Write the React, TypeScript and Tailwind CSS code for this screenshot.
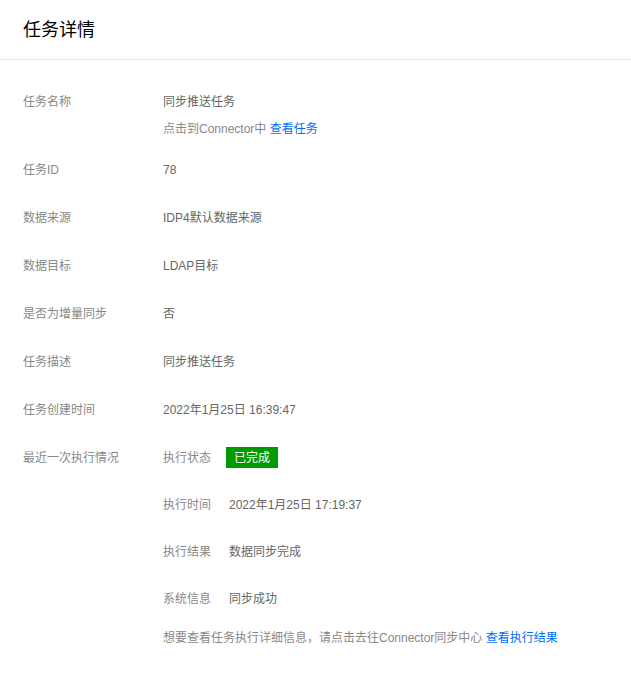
const font = { fontFamily: '"Liberation Sans", "Noto Sans CJK SC", sans-serif' };

function Row({ label, children, className = "" }: { label: string; children: React.ReactNode; className?: string }) {
  return (
    <div className={`flex text-[12px] leading-[18px] ${className}`}>
      <div className="w-[140px] shrink-0 text-[#888888]">{label}</div>
      <div className="flex-1 text-[#666666]">{children}</div>
    </div>
  );
}

function Sub({ label, children, className = "" }: { label: string; children: React.ReactNode; className?: string }) {
  return (
    <div className={`flex h-[21px] items-center ${className}`}>
      <div className="w-[66px] shrink-0 text-[#888888]">{label}</div>
      <div>{children}</div>
    </div>
  );
}

export default function App() {
  return (
    <div className="min-h-[680px] w-full bg-white" style={font}>
      <div className="flex h-[60px] items-center border-b border-[#e5e5e5] pl-[23px] pt-[1px]">
        <h1 className="text-[18px] font-normal text-[#000000]">任务详情</h1>
      </div>
      <div className="pl-[23px] pr-4 pt-[33px]">
        <Row label="任务名称" className="mb-[23px]">
          <div>同步推送任务</div>
          <div className="mt-[9px] text-[#888888]">
            点击到Connector中 <a className="cursor-pointer text-[#006eff]">查看任务</a>
          </div>
        </Row>
        <Row label="任务ID" className="mb-[30px]">78</Row>
        <Row label="数据来源" className="mb-[30px]">IDP4默认数据来源</Row>
        <Row label="数据目标" className="mb-[30px]">LDAP目标</Row>
        <Row label="是否为增量同步" className="mb-[30px]">否</Row>
        <Row label="任务描述" className="mb-[30px]">同步推送任务</Row>
        <Row label="任务创建时间" className="mb-[28px]">2022年1月25日 16:39:47</Row>
        <div className="flex text-[12px] leading-[18px]">
          <div className="flex h-[21px] w-[140px] shrink-0 items-center text-[#888888]">最近一次执行情况</div>
          <div className="flex-1 text-[#666666]">
            <Sub label="执行状态">
              <span className="-ml-[3px] inline-flex h-[21px] items-center bg-[#009a00] px-[8px] text-white">已完成</span>
            </Sub>
            <Sub label="执行时间" className="mt-[26px]">2022年1月25日 17:19:37</Sub>
            <Sub label="执行结果" className="mt-[26px]">数据同步完成</Sub>
            <Sub label="系统信息" className="mt-[26px]">同步成功</Sub>
            <div className="mt-[20px] text-[#888888]">
              想要查看任务执行详细信息，请点击去往Connector同步中心 <a className="cursor-pointer text-[#006eff]">查看执行结果</a>
            </div>
          </div>
        </div>
      </div>
    </div>
  );
}
